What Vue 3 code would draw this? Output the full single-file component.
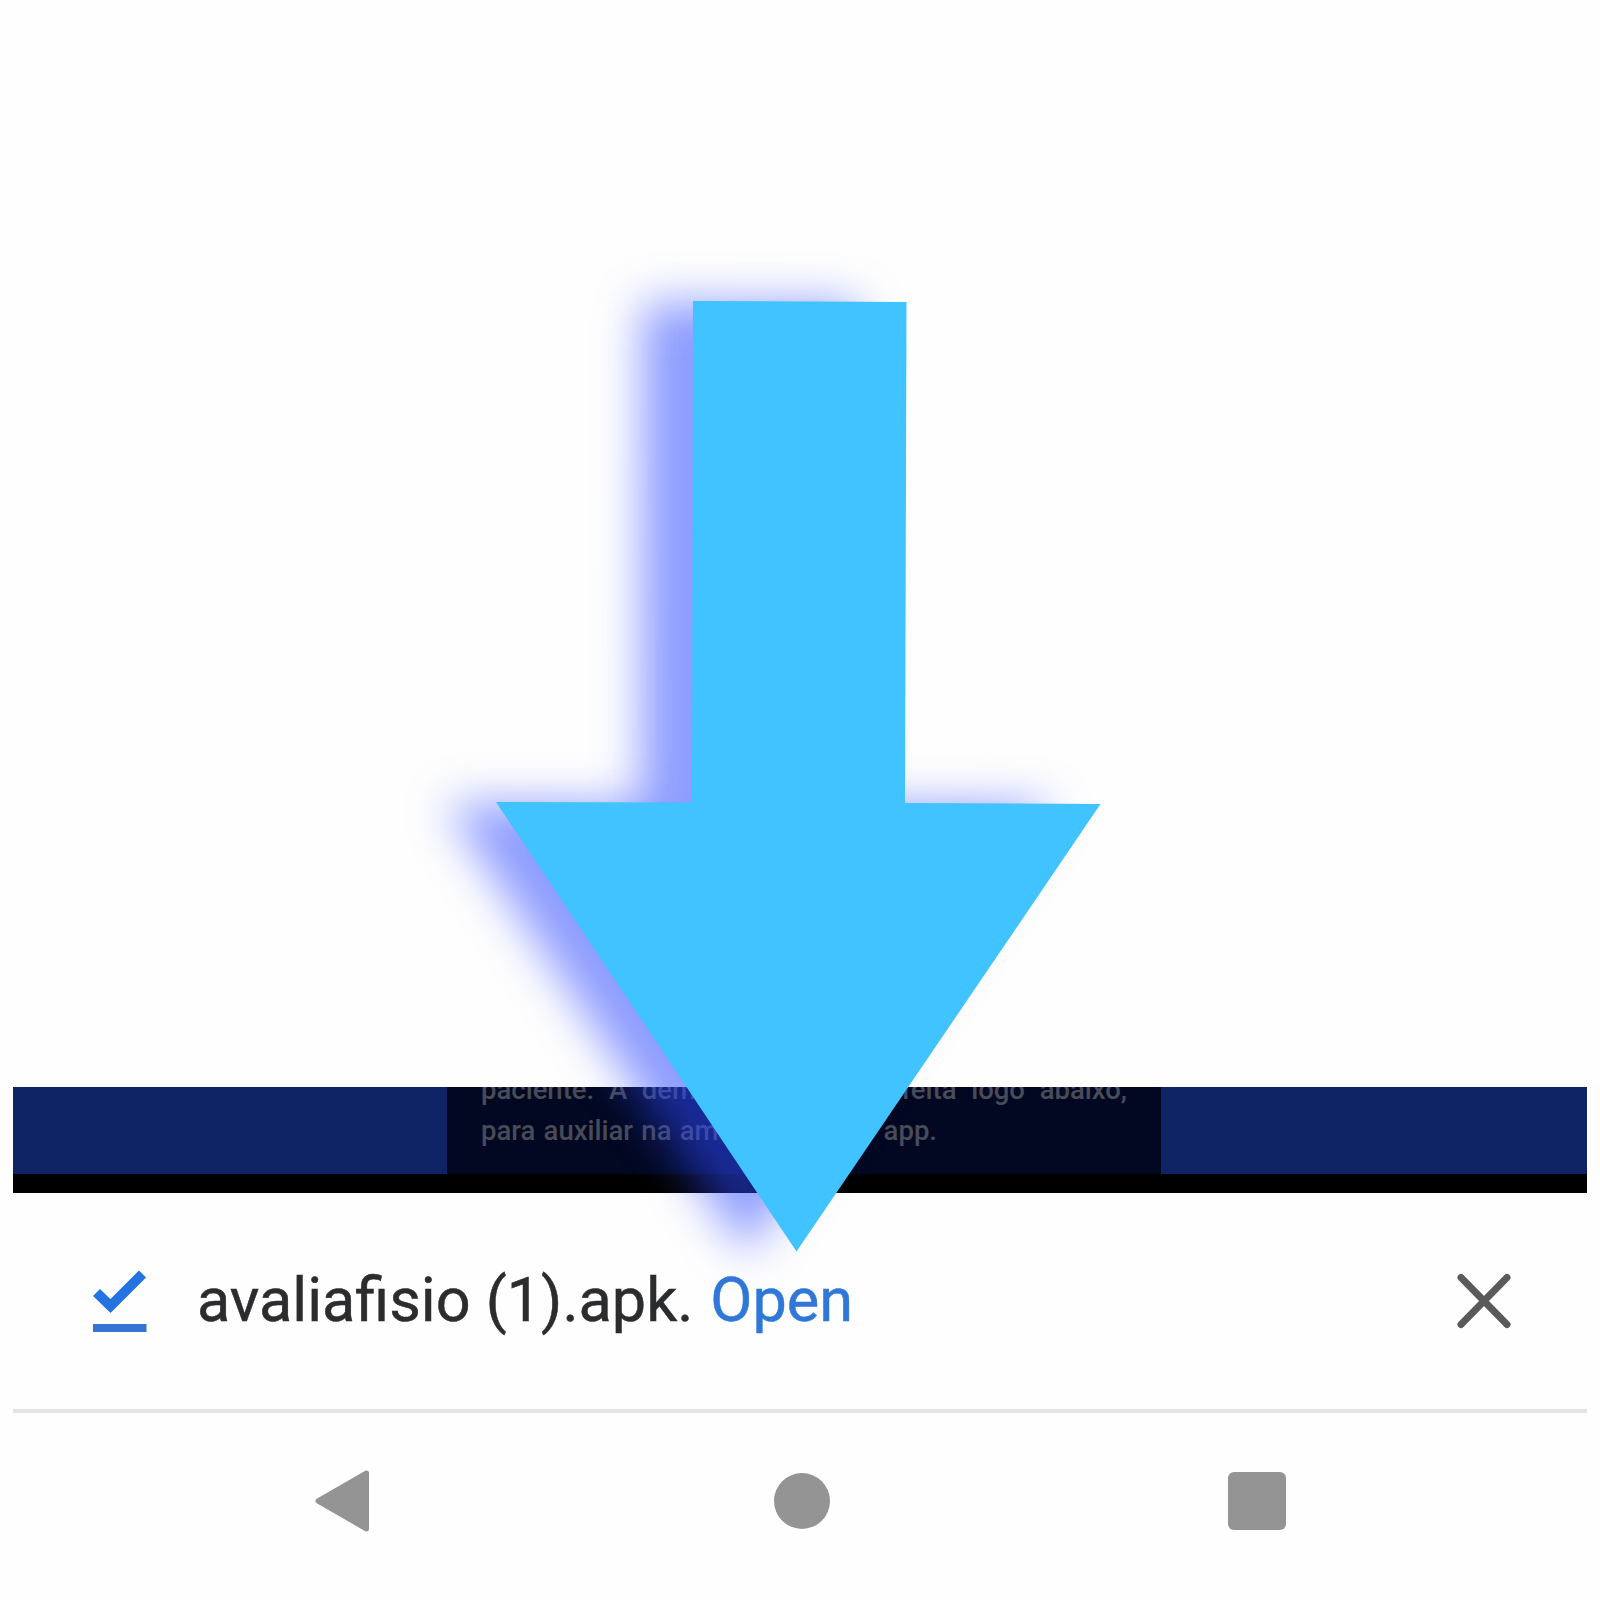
<script setup>
const arrow = '693,301 906.5,302 905,803 1100.5,804 796.5,1251.5 496,802 692,802.5'
</script>

<template>
  <main class="screen">
    <section class="page-strip">
      <div class="card">
        <p class="line justified">paciente. A demonstração será feita logo abaixo,</p>
        <p class="line second"><span>para auxiliar na amostragem</span><span>app.</span></p>
      </div>
    </section>

    <section class="download-bar">
      <svg class="done" viewBox="0 0 56 66">
        <path d="M4.500 24.500 L18.500 38 L50.500 6" fill="none" stroke="#2374e1" stroke-width="10" />
        <path d="M1 60H54.500" stroke="#3474d2" stroke-width="8" />
      </svg>
      <span class="file">avaliafisio (1).apk.</span>
      <a class="open">Open</a>
      <svg class="close" viewBox="0 0 56 56">
        <path d="M5 4.500 L51 51.500 M51 4.500 L5 51.500" stroke="#5a5a5a" stroke-width="7" stroke-linecap="round" />
      </svg>
    </section>

    <nav class="nav-bar">
      <svg class="back" viewBox="0 0 56 64">
        <path d="M52.500 4V60L4 32Z" fill="#949494" stroke="#949494" stroke-width="5" stroke-linejoin="round" />
      </svg>
      <span class="home"></span>
      <span class="recent"></span>
    </nav>

    <svg class="arrow" viewBox="0 0 1600 1600">
      <defs>
        <filter id="soft" x="-20%" y="-20%" width="140%" height="140%" color-interpolation-filters="sRGB">
          <feGaussianBlur stdDeviation="23" />
        </filter>
      </defs>
      <polygon :points="arrow" transform="translate(-50 2)" fill="#2c48ff" fill-opacity="0.54" filter="url(#soft)" />
      <polygon :points="arrow" fill="#40c3ff" />
    </svg>
  </main>
</template>

<style>
body {
  margin: 0;
  background: #fefefe;
}
</style>

<style scoped>
.screen {
  position: relative;
  box-sizing: border-box;
  width: 1600px;
  height: 1600px;
  padding: 1087px 13px 0;
  overflow: hidden;
  background: #fefefe;
  font-family: Roboto, sans-serif;
}
.page-strip {
  box-sizing: border-box;
  height: 106px;
  padding-left: 434px;
  overflow: hidden;
  background: #0e2464;
  border-bottom: 19px solid #000;
}
.card {
  box-sizing: border-box;
  width: 714px;
  height: 87px;
  padding: 0 34px;
  background: #020821;
  color: #484b58;
  font-size: 27.5px;
  font-weight: 500;
}
.line {
  margin: 0;
  height: 41px;
  line-height: 41px;
  white-space: nowrap;
}
.justified {
  margin-top: -18px;
  text-align: justify;
  text-align-last: justify;
  white-space: normal;
}
.card::before {
  content: '';
  display: table;
}
.second {
  display: flex;
  justify-content: space-between;
  width: 456px;
  word-spacing: 1.4px;
}
.download-bar {
  display: flex;
  align-items: center;
  box-sizing: border-box;
  height: 220px;
  padding: 0 75px 1px 79px;
  border-bottom: 4px solid #e4e4e4;
}
.done {
  width: 56px;
  height: 66px;
}
.file,
.open {
  margin-bottom: 2px;
  font-size: 61.2px;
  line-height: 72px;
  white-space: nowrap;
  -webkit-text-stroke: 0.5px currentColor;
}
.file {
  margin-left: 49px;
  color: #2b2c2e;
}
.open {
  margin-left: 17px;
  color: #2f78d8;
}
.close {
  width: 56px;
  height: 56px;
  margin-left: auto;
}
.nav-bar {
  display: flex;
  align-items: center;
  height: 176px;
  padding-left: 301px;
}
.back {
  width: 56px;
  height: 64px;
}
.home {
  width: 56px;
  height: 56px;
  margin-left: 404px;
  border-radius: 50%;
  background: #949494;
}
.recent {
  width: 58px;
  height: 58px;
  margin-left: 398px;
  border-radius: 6px;
  background: #949494;
}
.arrow {
  position: absolute;
  inset: 0;
  width: 1600px;
  height: 1600px;
}
</style>
